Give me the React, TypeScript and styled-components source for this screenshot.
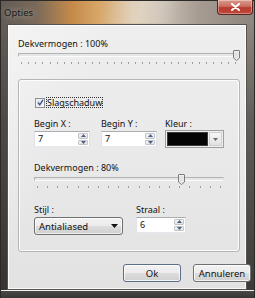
import React from 'react'
import styled, { createGlobalStyle } from 'styled-components'

const GlobalStyle = createGlobalStyle`
  html, body { margin: 0; padding: 0; }
  body {
    width: 255px;
    height: 298px;
    overflow: hidden;
    font-family: "Noto Sans", "Open Sans", sans-serif;
    font-size: 9px;
    color: #111;
  }
`

const Window = styled.div`
  width: 255px;
  height: 298px;
  box-sizing: border-box;
  display: flex;
  flex-direction: column;
  border: 1px solid #2c2a28;
  border-bottom: none;
  background:
    linear-gradient(180deg, rgba(40,38,36,0) 0, rgba(40,38,36,0) 22px, rgba(60,58,56,0.55) 120px, rgba(45,44,43,0.85) 100%),
    linear-gradient(90deg, #625b55 0%, #7a6a5a 14%, #c58a4a 28%, #d7a565 38%, #d9c6aa 52%, #c9bfb3 64%, #a69c92 78%, #8d857f 100%);
`

const TitleBar = styled.div`
  height: 22px;
  display: flex;
  align-items: flex-start;
  justify-content: space-between;
  padding-left: 3px;
  background: linear-gradient(110deg, rgba(255,255,255,0) 40%, rgba(255,255,255,0.25) 55%, rgba(255,255,255,0) 70%);
`

const Title = styled.span`
  font-size: 9.5px;
  line-height: 24px;
  color: #1d1b19;
  text-shadow: 0 0 6px rgba(255,255,255,0.6);
`

const CloseButton = styled.div`
  width: 36px;
  height: 15px;
  margin-top: -1px;
  margin-right: 1px;
  box-sizing: border-box;
  border: 1px solid #5a2420;
  border-top: none;
  border-radius: 0 0 4px 4px;
  background: linear-gradient(180deg, #d99a8e 0%, #cc6e60 45%, #b63b30 55%, #c0483b 100%);
  box-shadow: inset 0 0 0 1px rgba(255,255,255,0.35);
  display: flex;
  align-items: center;
  justify-content: center;
`

const Client = styled.div`
  flex: 1;
  margin: 1px 7px 0 6px;
  box-sizing: border-box;
  border: 1px solid #55524f;
  box-shadow: inset 0 0 0 1px rgba(255,255,255,0.8);
  background:
    linear-gradient(115deg, rgba(255,255,255,0.35) 0%, rgba(255,255,255,0) 30%),
    linear-gradient(180deg, #eeeeee 0%, #e8e8e8 60%, #e2e2e2 100%);
  padding: 12px 7px 0 10px;
  display: flex;
  flex-direction: column;
`

const BottomEdge = styled.div`
  height: 7px;
  border-top: 1px solid #f4f4f4;
  background: linear-gradient(180deg, #4a4846, #383736);
`

const Caption = styled.div`
  line-height: 13px;
  height: 13px;
`

const SliderWrap = styled.div<{ $w: number }>`
  position: relative;
  width: ${p => p.$w}px;
  height: 16px;
  display: flex;
  flex-direction: column;
`

const Track = styled.div`
  margin-top: 3px;
  height: 2px;
  border: 1px solid #b3b3b3;
  border-right-color: #e0e0e0;
  border-bottom-color: #fbfbfb;
  background: #e4e6e7;
`

const Ticks = styled.div`
  margin-top: 5px;
  padding: 0 3px;
  display: flex;
  justify-content: space-between;
`

const Tick = styled.span`
  width: 1px;
  height: 2px;
  background: #9d9d9d;
`

const Thumb = styled.svg`
  position: absolute;
  top: 0;
  margin-left: -3px;
`

const GroupBox = styled.div`
  margin-top: 13px;
  width: 222px;
  height: 173px;
  box-sizing: border-box;
  border: 1px solid #b4b6b8;
  border-radius: 3px;
  box-shadow: inset 0 0 0 1px rgba(255,255,255,0.85);
  padding: 17px 0 0 15px;
  display: flex;
  flex-direction: column;
`

const CheckRow = styled.label`
  display: flex;
  align-items: center;
  height: 11px;
  padding-left: 1px;
`

const CheckBox = styled.span`
  width: 10px;
  height: 10px;
  box-sizing: border-box;
  border: 1px solid #8e8f8f;
  background: linear-gradient(135deg, #dcdcdc, #f8f8f8);
  box-shadow: inset 0 0 0 1px #f4f4f4;
  display: flex;
  align-items: center;
  justify-content: center;
`

const CheckLabel = styled.span`
  margin-left: 1px;
  padding: 0 1px;
  line-height: 11px;
  outline: 1px dotted #333;
  outline-offset: -1px;
`

const FieldRow = styled.div<{ $top: number }>`
  margin-top: ${p => p.$top}px;
  display: flex;
`

const Field = styled.div<{ $w: number }>`
  width: ${p => p.$w}px;
  display: flex;
  flex-direction: column;
`

const FieldLabel = styled.div`
  line-height: 12px;
  height: 12px;
  margin-bottom: 1px;
`

const SpinBox = styled.div<{ $w: number }>`
  width: ${p => p.$w}px;
  height: 16px;
  box-sizing: border-box;
  border: 1px solid #abadb3;
  border-right-color: #dbdfe6;
  border-bottom-color: #e3e9ef;
  border-left-color: #e2e3ea;
  background: #fff;
  display: flex;
  align-items: stretch;
`

const SpinValue = styled.span`
  flex: 1;
  padding-left: 3px;
  line-height: 14px;
`

const SpinButtons = styled.div`
  width: 10px;
  margin: 1px 1px 1px 0;
  display: flex;
  flex-direction: column;
  gap: 1px;
`

const SpinButton = styled.div`
  flex: 1;
  border: 1px solid #c2c4c7;
  border-radius: 1px;
  background: linear-gradient(180deg, #f7f7f7, #e2e2e2);
  display: flex;
  align-items: center;
  justify-content: center;
`

const ColorPicker = styled.div`
  width: 59px;
  height: 18px;
  margin-top: -1px;
  box-sizing: border-box;
  border: 1px solid #9d9d9d;
  background: #f0f0f0;
  padding: 1px;
  display: flex;
  gap: 1px;
`

const Swatch = styled.div`
  flex: 1;
  background: #050505;
  border: 1px solid #3a3a3a;
`

const DropButton = styled.div`
  width: 11px;
  border: 1px solid #cfcfcf;
  background: linear-gradient(180deg, #f6f6f6, #e1e1e1);
  display: flex;
  align-items: center;
  justify-content: center;
`

const ComboBox = styled.div`
  width: 89px;
  height: 18px;
  box-sizing: border-box;
  border: 1px solid #707070;
  border-radius: 3px;
  background: linear-gradient(180deg, #f2f2f2 0%, #ebebeb 50%, #dddddd 51%, #cfcfcf 100%);
  box-shadow: inset 0 0 0 1px rgba(255,255,255,0.7);
  padding: 0 4px 0 4px;
  display: flex;
  align-items: center;
  justify-content: space-between;
  font-size: 9.5px;
`

const ButtonRow = styled.div`
  margin-top: 12px;
  width: 233px;
  display: flex;
  justify-content: flex-end;
  gap: 12px;
`

const PushButton = styled.div<{ $default?: boolean }>`
  width: 58px;
  height: 18px;
  box-sizing: border-box;
  border: 1px solid ${p => (p.$default ? '#5a6e86' : '#707070')};
  border-radius: 3px;
  background: linear-gradient(180deg, #f2f2f2 0%, #ebebeb 50%, #dddddd 51%, #cfcfcf 100%);
  box-shadow: inset 0 0 0 1px rgba(255,255,255,0.75);
  display: flex;
  align-items: center;
  justify-content: center;
  font-size: 9.5px;
`

const Arrow = ({ up, color = '#4d6185' }: { up?: boolean; color?: string }) => (
  <svg width="5" height="3" viewBox="0 0 5 3">
    <path d={up ? 'M0 3 L2.5 0 L5 3 Z' : 'M0 0 L5 0 L2.5 3 Z'} fill={color} />
  </svg>
)

const Slider = ({ width, value, ticks }: { width: number; value: number; ticks: number }) => (
  <SliderWrap $w={width}>
    <Track />
    <Ticks>
      {Array.from({ length: ticks }).map((_, i) => (
        <Tick key={i} />
      ))}
    </Ticks>
    <Thumb width="7" height="11" viewBox="0 0 7 11" style={{ left: 3 + value * (width - 6) }}>
      <path d="M0.5 1 Q0.5 0.5 1 0.5 L6 0.5 Q6.5 0.5 6.5 1 L6.5 8 L3.5 10.5 L0.5 8 Z" fill="#f1f1f1" stroke="#7b7b7b" />
      <path d="M1.5 2 L5.5 2 L5.5 7.5 L3.5 9 L1.5 7.5 Z" fill="#e2e2e2" />
    </Thumb>
  </SliderWrap>
)

const Spin = ({ width, value }: { width: number; value: string }) => (
  <SpinBox $w={width}>
    <SpinValue>{value}</SpinValue>
    <SpinButtons>
      <SpinButton>
        <Arrow up />
      </SpinButton>
      <SpinButton>
        <Arrow />
      </SpinButton>
    </SpinButtons>
  </SpinBox>
)

export default function App() {
  return (
    <>
      <GlobalStyle />
      <Window>
        <TitleBar>
          <Title>Opties</Title>
          <CloseButton>
            <svg width="9" height="8" viewBox="0 0 9 8">
              <path d="M1 1 L8 7 M8 1 L1 7" stroke="#fff" strokeWidth="2" strokeLinecap="round" />
            </svg>
          </CloseButton>
        </TitleBar>
        <Client>
          <Caption>Dekvermogen : 100%</Caption>
          <Slider width={221} value={1} ticks={31} />

          <GroupBox>
            <CheckRow>
              <CheckBox>
                <svg width="7" height="7" viewBox="0 0 7 7">
                  <path d="M1 3.5 L2.8 5.8 L6 0.8" fill="none" stroke="#3a5590" strokeWidth="1.4" />
                </svg>
              </CheckBox>
              <CheckLabel>Slagschaduw</CheckLabel>
            </CheckRow>

            <FieldRow $top={10}>
              <Field $w={67}>
                <FieldLabel>Begin X :</FieldLabel>
                <Spin width={56} value="7" />
              </Field>
              <Field $w={64}>
                <FieldLabel>Begin Y :</FieldLabel>
                <Spin width={56} value="7" />
              </Field>
              <Field $w={60}>
                <FieldLabel>Kleur :</FieldLabel>
                <ColorPicker>
                  <Swatch />
                  <DropButton>
                    <Arrow color="#6a6a6a" />
                  </DropButton>
                </ColorPicker>
              </Field>
            </FieldRow>

            <FieldRow $top={13}>
              <Field $w={191}>
                <Caption>Dekvermogen : 80%</Caption>
                <Slider width={190} value={0.78} ticks={19} />
              </Field>
            </FieldRow>

            <FieldRow $top={14}>
              <Field $w={102}>
                <FieldLabel>Stijl :</FieldLabel>
                <ComboBox>
                  <span>Antialiased</span>
                  <svg width="7" height="4" viewBox="0 0 7 4">
                    <path d="M0 0 L7 0 L3.5 4 Z" fill="#111" />
                  </svg>
                </ComboBox>
              </Field>
              <Field $w={60}>
                <FieldLabel>Straal :</FieldLabel>
                <Spin width={50} value="6" />
              </Field>
            </FieldRow>
          </GroupBox>

          <ButtonRow>
            <PushButton $default>Ok</PushButton>
            <PushButton>Annuleren</PushButton>
          </ButtonRow>
        </Client>
        <BottomEdge />
      </Window>
    </>
  )
}
